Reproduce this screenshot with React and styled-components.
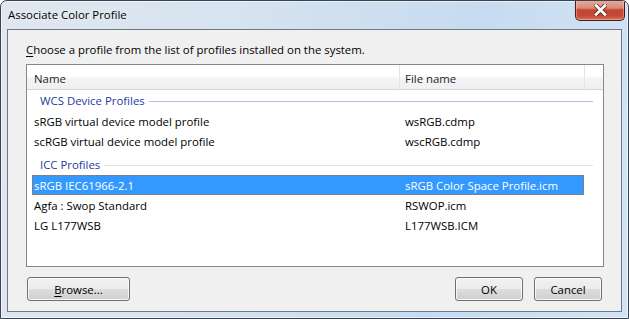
import React from "react";
import styled, { createGlobalStyle } from "styled-components";

const Global = createGlobalStyle`
  html, body { margin: 0; padding: 0; background: #ffffff; }
  body {
    font-family: "Open Sans", "Noto Sans", sans-serif;
    font-size: 11.4px;
    color: #000;
  }
  #root { width: 629px; height: 319px; }
  * { box-sizing: border-box; }
`;

const Window = styled.div`
  width: 629px;
  height: 319px;
  border: 1px solid #3b4350;
  border-radius: 7px 7px 0 0;
  background: linear-gradient(100deg, #dfe7f0 0%, #d6e3f0 35%, #c7dbf0 70%, #d2e4f6 100%);
  box-shadow: inset 0 0 0 1px rgba(255, 255, 255, 0.55);
  display: flex;
  flex-direction: column;
  overflow: hidden;
`;

const TitleBar = styled.div`
  height: 28px;
  flex: none;
  display: flex;
  align-items: flex-start;
  justify-content: space-between;
  padding: 0 3px 0 7px;
`;

const Title = styled.div`
  align-self: center;
  line-height: 16px;
  color: #000;
  text-shadow: 0 0 6px rgba(255, 255, 255, 0.9);
`;

const CloseButton = styled.div`
  width: 50px;
  height: 21px;
  margin-top: -1px;
  border: 1px solid #4b1b13;
  border-top: none;
  border-radius: 0 0 5px 5px;
  background: linear-gradient(
    180deg,
    #e7ada0 0%,
    #dc8a78 40%,
    #c6462f 50%,
    #c24a34 78%,
    #d8735c 100%
  );
  box-shadow: inset 0 0 0 1px rgba(255, 200, 190, 0.45);
  display: flex;
  align-items: center;
  justify-content: center;
`;

const Frame = styled.div`
  flex: 1;
  display: flex;
  padding: 0 6px 6px 6px;
`;

const Client = styled.div`
  flex: 1;
  border: 1px solid #6f7985;
  background: #f0f0f0;
  display: flex;
  flex-direction: column;
  padding: 12px 17px 10px 18px;
`;

const Prompt = styled.div`
  line-height: 15px;
  height: 15px;
  margin-bottom: 7px;
  white-space: nowrap;
`;

const Key = styled.span`
  text-decoration: underline;
  text-underline-offset: 2px;
`;

const ListBox = styled.div`
  height: 203px;
  flex: none;
  border: 1px solid #828790;
  background: #ffffff;
  display: flex;
  flex-direction: column;
  overflow: hidden;
`;

const Header = styled.div`
  height: 25px;
  flex: none;
  display: flex;
  border-bottom: 1px solid #d5d5d5;
  background: linear-gradient(180deg, #ffffff 0%, #ffffff 45%, #f3f4f6 55%, #eff0f2 100%);
`;

const HeaderCell = styled.div`
  width: ${(p) => (p.$w ? `${p.$w}px` : "auto")};
  flex: ${(p) => (p.$w ? "none" : "1")};
  border-right: ${(p) => (p.$w ? "1px solid #e2e6ec" : "none")};
  padding-left: ${(p) => p.$pad || 0}px;
  padding-top: 2px;
  display: flex;
  align-items: center;
  color: #1e1e1e;
  white-space: nowrap;
`;

const Group = styled.div`
  height: 21px;
  flex: none;
  margin: ${(p) => p.$top || 0}px 10px 0 13px;
  display: flex;
  align-items: center;
  gap: 4px;
  color: #1e3c9e;
  white-space: nowrap;
`;

const GroupLine = styled.div`
  flex: 1;
  height: 1px;
  margin-top: 1px;
  background: ${(p) => (p.$active ? "#b3bee0" : "#dde2ea")};
`;

const Row = styled.div`
  width: 552px;
  height: 20px;
  flex: none;
  margin-left: 5px;
  padding-left: 1px;
  display: grid;
  grid-template-columns: 371px 1fr;
  align-items: center;
  white-space: nowrap;
  border: 1px ${(p) => (p.$selected ? "dotted #c8661a" : "solid transparent")};
  background: ${(p) => (p.$selected ? "#3399ff" : "transparent")};
  color: ${(p) => (p.$selected ? "#ffffff" : "#000000")};
`;

const Buttons = styled.div`
  margin-top: 10px;
  display: flex;
  align-items: center;
  gap: 11px;
  padding: 0 2px 0 1px;
`;

const Spacer = styled.div`
  flex: 1;
`;

const Button = styled.div`
  width: ${(p) => p.$w}px;
  height: 24px;
  border: 1px solid #707070;
  border-radius: 3px;
  background: linear-gradient(180deg, #f2f2f2 0%, #ebebeb 48%, #dddddd 52%, #cfcfcf 100%);
  box-shadow: inset 0 0 0 1px rgba(252, 252, 252, 0.85);
  display: flex;
  align-items: center;
  justify-content: center;
  color: #000;
  line-height: 15px;
`;

const CloseIcon = () => (
  <svg width="13" height="12" viewBox="0 0 13 12">
    <path d="M2 1.5 L11 10.5 M11 1.5 L2 10.5" stroke="#4a2a24" strokeWidth="4.6" strokeLinecap="square" opacity="0.75" />
    <path d="M2 1.5 L11 10.5 M11 1.5 L2 10.5" stroke="#ffffff" strokeWidth="2.6" strokeLinecap="square" />
  </svg>
);

const wcs = [
  ["sRGB virtual device model profile", "wsRGB.cdmp"],
  ["scRGB virtual device model profile", "wscRGB.cdmp"],
];

const icc = [
  ["sRGB IEC61966-2.1", "sRGB Color Space Profile.icm", true],
  ["Agfa : Swop Standard", "RSWOP.icm"],
  ["LG L177WSB", "L177WSB.ICM"],
];

export default function App() {
  return (
    <>
      <Global />
      <Window>
        <TitleBar>
          <Title>Associate Color Profile</Title>
          <CloseButton>
            <CloseIcon />
          </CloseButton>
        </TitleBar>
        <Frame>
          <Client>
            <Prompt>
              <Key>C</Key>hoose a profile from the list of profiles installed on the system.
            </Prompt>
            <ListBox>
              <Header>
                <HeaderCell $w={373} $pad={7}>Name</HeaderCell>
                <HeaderCell $w={185} $pad={5}>File name</HeaderCell>
                <HeaderCell />
              </Header>
              <Group>
                WCS Device Profiles
                <GroupLine $active />
              </Group>
              {wcs.map(([n, f]) => (
                <Row key={n}>
                  <span>{n}</span>
                  <span>{f}</span>
                </Row>
              ))}
              <Group $top={3}>
                ICC Profiles
                <GroupLine />
              </Group>
              {icc.map(([n, f, s]) => (
                <Row key={n} $selected={s}>
                  <span>{n}</span>
                  <span>{f}</span>
                </Row>
              ))}
            </ListBox>
            <Buttons>
              <Button $w={103}>
                <span>
                  <Key>B</Key>rowse...
                </span>
              </Button>
              <Spacer />
              <Button $w={68}>OK</Button>
              <Button $w={68}>Cancel</Button>
            </Buttons>
          </Client>
        </Frame>
      </Window>
    </>
  );
}
